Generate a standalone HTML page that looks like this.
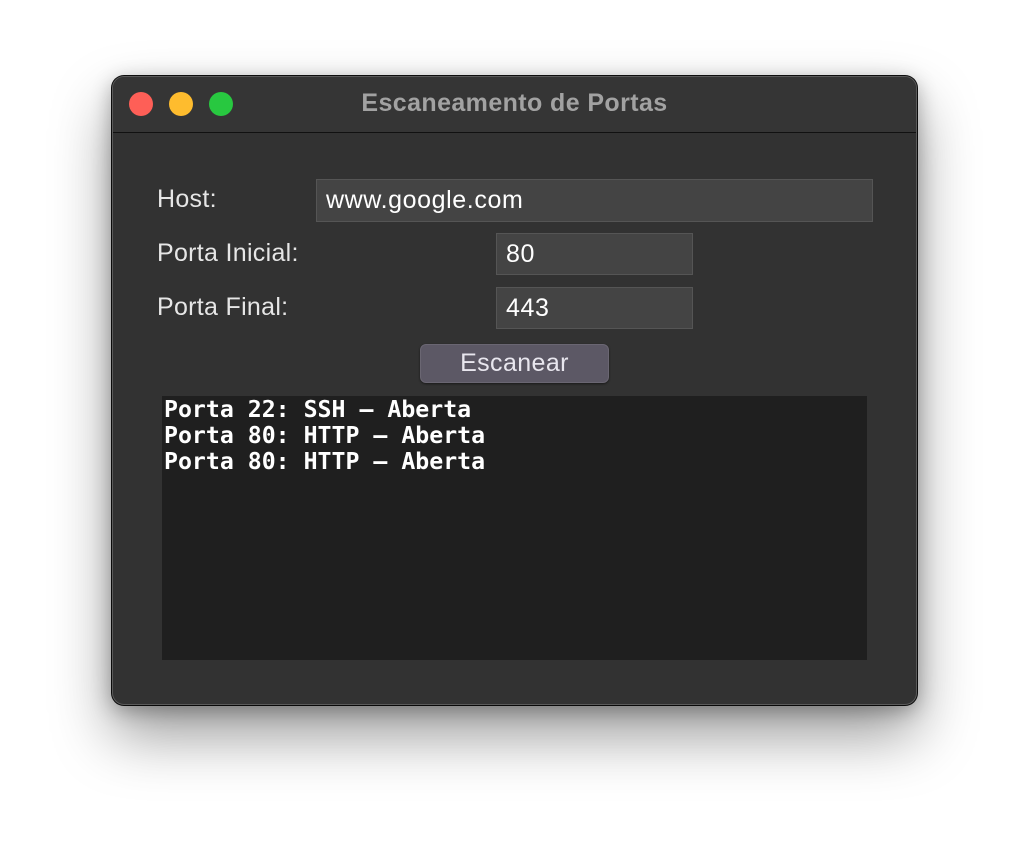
<!DOCTYPE html>
<html><head><meta charset="utf-8"><style>
body{margin:0;width:1030px;height:854px;background:#fff;position:relative;overflow:hidden;font-family:"Liberation Sans",sans-serif}
.win{position:absolute;left:112px;top:76px;width:805px;height:629px;background:#323232;border-radius:12px;border:1px solid #5a5a5a;box-sizing:border-box;box-shadow:0 30px 60px rgba(0,0,0,.4),0 5px 20px rgba(0,0,0,.3),0 0 0 1px #111;overflow:hidden}
.tb{position:absolute;left:0;top:0;right:0;height:55px;background:#353535;border-bottom:1px solid #111}
.dot{position:absolute;top:15px;width:24px;height:24px;border-radius:50%}
.title{position:absolute;left:0;right:0;top:12px;text-align:center;color:#a2a2a2;font-weight:bold;font-size:25px;letter-spacing:0.4px}
.lbl{position:absolute;color:#e6e6e6;font-size:25px;letter-spacing:0.3px}
.inp{position:absolute;background:#444;border:1px solid #555;box-sizing:border-box;color:#fff;font-size:25px;letter-spacing:0.6px;padding:5px 9px;line-height:30px}
.btn{position:absolute;left:307px;top:267px;width:189px;height:39px;background:#5c5865;border-radius:6px;border:1px solid #6a6672;box-sizing:border-box;color:#e8e6ee;font-size:25px;letter-spacing:0.4px;text-align:center;line-height:36px;box-shadow:0 1px 2px rgba(0,0,0,.5)}
.out{position:absolute;left:49px;top:319px;width:705px;height:264px;background:#1f1f1f;color:#fff;font-family:"DejaVu Sans Mono","Liberation Mono",monospace;font-weight:bold;font-size:23.2px;line-height:26px;padding:1px 2px;box-sizing:border-box;white-space:pre}
</style></head><body>
<div class="win">
<div class="tb">
<div class="dot" style="left:16px;background:#fe5f57"></div>
<div class="dot" style="left:56px;background:#febc2e"></div>
<div class="dot" style="left:96px;background:#28c840"></div>
<div class="title">Escaneamento de Portas</div>
</div>
<div class="lbl" style="left:44px;top:108px">Host:</div>
<div class="inp" style="left:203px;top:102px;width:557px;height:43px">www.google.com</div>
<div class="lbl" style="left:44px;top:162px">Porta Inicial:</div>
<div class="inp" style="left:383px;top:156px;width:197px;height:42px">80</div>
<div class="lbl" style="left:44px;top:216px">Porta Final:</div>
<div class="inp" style="left:383px;top:210px;width:197px;height:42px">443</div>
<div class="btn">Escanear</div>
<div class="out">Porta 22: SSH – Aberta
Porta 80: HTTP – Aberta
Porta 80: HTTP – Aberta</div>
</div>
</body></html>
